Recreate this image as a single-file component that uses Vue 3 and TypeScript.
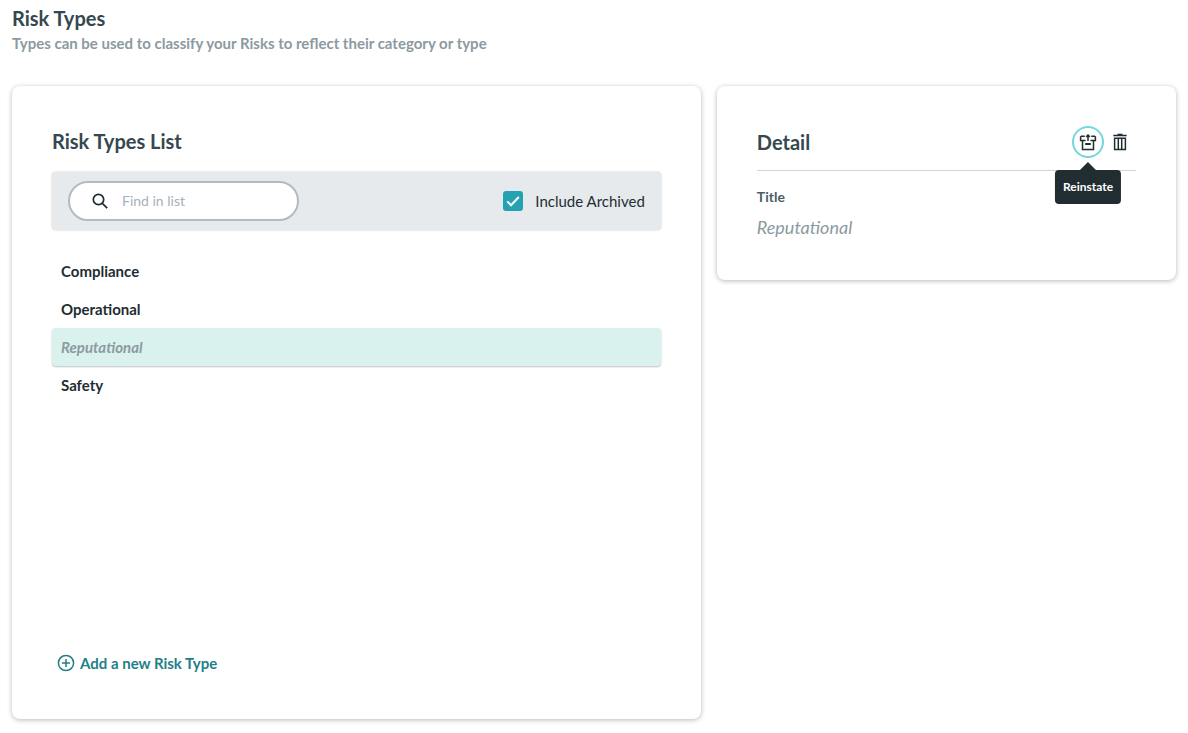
<script setup lang="ts">
import { computed, ref } from 'vue'

interface RiskType {
  name: string
  archived: boolean
}

const riskTypes: RiskType[] = [
  { name: 'Compliance', archived: false },
  { name: 'Operational', archived: false },
  { name: 'Reputational', archived: true },
  { name: 'Safety', archived: false },
]

const search = ref('')
const includeArchived = ref(true)
const selected = ref('Reputational')

const visibleTypes = computed(() =>
  riskTypes.filter(
    (t) =>
      (includeArchived.value || !t.archived) &&
      t.name.toLowerCase().includes(search.value.toLowerCase()),
  ),
)
</script>

<template>
  <main class="page">
    <header class="page-header">
      <h1>Risk Types</h1>
      <p>Types can be used to classify your Risks to reflect their category or type</p>
    </header>

    <div class="columns">
      <section class="card list-card">
        <h2>Risk Types List</h2>

        <div class="filters">
          <label class="search" for="find">
            <svg class="search-icon" viewBox="0 0 16 16" aria-hidden="true">
              <circle cx="6.5" cy="6.5" r="5.2" />
              <path d="M10.3 10.3L15.2 15.2" />
            </svg>
            <input id="find" v-model="search" type="text" placeholder="Find in list" aria-label="Find in list" />
          </label>
          <label class="check" for="archived">
            <span class="tick">
              <input id="archived" v-model="includeArchived" type="checkbox" />
              <svg viewBox="0 0 20 20" aria-hidden="true"><path d="M4.2 10.4L8 14.2L15.8 6" /></svg>
            </span>
            <span>Include Archived</span>
          </label>
        </div>

        <ul class="types">
          <li v-for="t in visibleTypes" :key="t.name">
            <button
              type="button"
              class="type"
              :class="{ archived: t.archived, selected: t.name === selected }"
              @click="selected = t.name"
            >
              {{ t.name }}
            </button>
          </li>
        </ul>

        <button type="button" class="add">
          <svg viewBox="0 0 18 18" aria-hidden="true">
            <circle cx="9" cy="9" r="7.6" />
            <path d="M9 5v8M5 9h8" />
          </svg>
          <span>Add a new Risk Type</span>
        </button>
      </section>

      <section class="card detail-card">
        <div class="detail-head">
          <h2>Detail</h2>
          <div class="actions">
            <div class="action">
              <button type="button" class="icon-button active" aria-labelledby="reinstate-tip">
                <svg viewBox="0 0 18 18" aria-hidden="true">
                  <path d="M5.8 3.2H2.4L1.6 4V7.5H6.6" />
                  <path d="M12.2 3.2H15.6L16.4 4V7.5H11.4" />
                  <path d="M3.5 7.5V16.4H14.5V7.5" />
                  <path class="thick" d="M6.2 11H11.8" />
                  <path d="M9 8V2M7.2 3.9L9 2.1L10.8 3.9" />
                </svg>
              </button>
              <span id="reinstate-tip" class="tooltip" role="tooltip">Reinstate</span>
            </div>
            <button type="button" class="icon-button" aria-label="Delete">
              <svg viewBox="0 0 18 18" aria-hidden="true">
                <path d="M2.3 2.5H15.7M6.5 1.4H11.5" />
                <path d="M3.6 5.3H14.4V16.4H3.6Z" />
                <path d="M7.3 5.3V16.4M10.7 5.3V16.4" />
              </svg>
            </button>
          </div>
        </div>
        <dl>
          <dt>Title</dt>
          <dd>{{ selected }}</dd>
        </dl>
      </section>
    </div>
  </main>
</template>

<style>
body {
  margin: 0;
  background: #fff;
}
</style>

<style scoped>
* {
  box-sizing: border-box;
}

.page {
  display: flex;
  flex-direction: column;
  min-height: 100vh;
  padding: 6px 12px 14px;
  color: #1f2d33;
  font-family: Lato, 'Open Sans', sans-serif;
  font-size: 15px;
  line-height: 24px;
}

button,
input {
  font: inherit;
  color: inherit;
}

button {
  padding: 0;
  border: 0;
  background: none;
  cursor: pointer;
}

h1,
h2,
p,
ul,
dl,
dd {
  margin: 0;
  padding: 0;
}

h1,
h2 {
  color: #37474f;
  font-size: 20px;
  font-weight: 700;
  line-height: 24px;
}

svg {
  display: block;
  fill: none;
  stroke: currentColor;
}

.page-header {
  margin-bottom: 30px;
}

.page-header p {
  color: #8c9a9f;
  font-size: 15px;
  font-weight: 700;
  line-height: 26px;
}

.columns {
  display: grid;
  flex: 1;
  grid-template-columns: 3fr 2fr;
  align-items: start;
  gap: 16px;
}

.card {
  min-width: 0;
  padding: 40px;
  border-radius: 8px;
  background: #fff;
  box-shadow: 0 1px 5px rgba(0, 0, 0, 0.28);
}

.list-card {
  display: flex;
  flex-direction: column;
  align-self: stretch;
}

.list-card h2 {
  line-height: 30px;
}

.filters {
  display: flex;
  align-items: center;
  justify-content: space-between;
  height: 58px;
  margin-top: 16px;
  padding: 0 16px;
  border-radius: 4px;
  background: #e6eaed;
  box-shadow: 0 0 2px rgba(0, 0, 0, 0.25);
}

.search {
  display: flex;
  align-items: center;
  gap: 14px;
  width: 231px;
  height: 40px;
  padding: 0 22px;
  border: 2px solid #b3bac0;
  border-radius: 20px;
  background: #fff;
}

.search-icon {
  flex: none;
  width: 16px;
  height: 16px;
  stroke-width: 1.7;
}

.search input {
  width: 100%;
  min-width: 0;
  padding: 0;
  border: 0;
  outline: 0;
  background: none;
  font-size: 14px;
}

.search input::placeholder {
  color: #a5b2bd;
  opacity: 1;
}

.check {
  display: flex;
  align-items: center;
  gap: 12px;
}

.tick {
  display: grid;
  width: 20px;
  height: 20px;
}

.tick > * {
  grid-area: 1 / 1;
}

.tick input {
  width: 20px;
  height: 20px;
  margin: 0;
  border: 2px solid #b3bac0;
  border-radius: 3px;
  background: #fff;
  appearance: none;
}

.tick input:checked {
  border-color: #25a2b2;
  background: #25a2b2;
}

.tick svg {
  z-index: 1;
  color: #fff;
  stroke-width: 2;
  pointer-events: none;
}

.types {
  margin: 22px 0;
  list-style: none;
}

.types li {
  height: 38px;
}

.type {
  width: 100%;
  height: 38px;
  padding: 0 9px;
  border-radius: 4px;
  font-weight: 700;
  text-align: left;
}

.type.archived {
  color: #8c9a9f;
  font-style: italic;
}

.type.selected {
  background: #daf2ee;
  box-shadow: 0 1px 2px rgba(0, 0, 0, 0.25);
}

.add {
  display: flex;
  align-items: center;
  align-self: flex-start;
  gap: 5px;
  height: 32px;
  margin-top: auto;
  padding: 0 5px;
  color: #1f8087;
  font-weight: 700;
}

.add svg {
  width: 18px;
  height: 18px;
  stroke-width: 1.5;
}

.detail-head {
  display: flex;
  justify-content: space-between;
  height: 45px;
  border-bottom: 1px solid #cfd5d9;
}

.detail-head h2 {
  line-height: 32px;
}

.actions {
  display: flex;
}

.action {
  position: relative;
}

.icon-button {
  display: grid;
  place-items: center;
  width: 32px;
  height: 32px;
  border-radius: 50%;
}

.icon-button.active {
  border: 2px solid #76d5df;
}

.icon-button svg {
  width: 18px;
  height: 18px;
  stroke-width: 1.5;
}

.icon-button .thick {
  stroke-width: 2;
}

.tooltip {
  position: absolute;
  top: 44px;
  left: 50%;
  padding: 5px 8px;
  border-radius: 4px;
  background: #222d31;
  color: #fff;
  font-size: 12px;
  font-weight: 700;
  transform: translateX(-50%);
}

.tooltip::before {
  position: absolute;
  bottom: 100%;
  left: 50%;
  margin-left: -8px;
  border: 8px solid transparent;
  border-top-width: 0;
  border-bottom-color: #222d31;
  content: '';
}

dt {
  margin-top: 14px;
  color: #4b5d66;
  font-size: 14px;
  font-weight: 700;
}

dd {
  padding: 6px 0 1px;
  color: #8c9a9f;
  font-size: 18px;
  font-style: italic;
}
</style>
